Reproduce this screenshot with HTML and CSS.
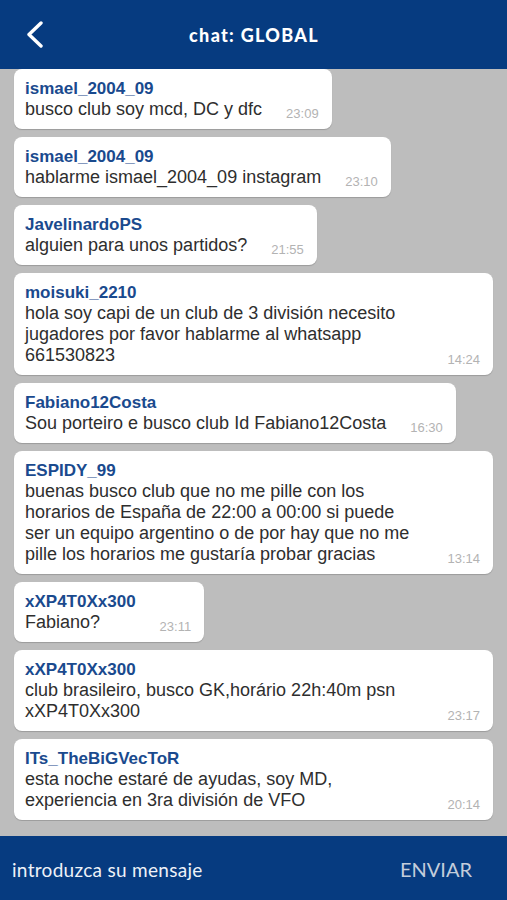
FILE: index.html
```html
<!DOCTYPE html>
<html lang="es">
<head>
<meta charset="utf-8">
<title>chat: GLOBAL</title>
<link rel="stylesheet" href="styles.css">
</head>
<body>
<div class="app">
  <header class="topbar">
    <svg class="back" width="20" height="30" viewBox="0 0 20 30" aria-hidden="true">
      <polyline points="14,2 2,13.5 14,25" fill="none" stroke="#fff" stroke-width="3.4" stroke-linecap="round" stroke-linejoin="round"/>
    </svg>
    <h1 class="title">chat: GLOBAL</h1>
  </header>
  <main class="list">
    <div class="msg">
      <div class="body"><div class="name">ismael_2004_09</div><div class="text">busco club soy mcd, DC y dfc</div></div>
      <div class="time">23:09</div>
    </div>
    <div class="msg">
      <div class="body"><div class="name">ismael_2004_09</div><div class="text">hablarme ismael_2004_09 instagram</div></div>
      <div class="time">23:10</div>
    </div>
    <div class="msg">
      <div class="body"><div class="name">JavelinardoPS</div><div class="text">alguien para unos partidos?</div></div>
      <div class="time">21:55</div>
    </div>
    <div class="msg">
      <div class="body wide"><div class="name">moisuki_2210</div><div class="text">hola soy capi de un club de 3 división necesito jugadores por favor hablarme al whatsapp 661530823</div></div>
      <div class="time">14:24</div>
    </div>
    <div class="msg">
      <div class="body"><div class="name">Fabiano12Costa</div><div class="text">Sou porteiro e busco club Id Fabiano12Costa</div></div>
      <div class="time">16:30</div>
    </div>
    <div class="msg">
      <div class="body wide"><div class="name">ESPIDY_99</div><div class="text">buenas busco club que no me pille con los horarios de España de 22:00 a 00:00 si puede ser un equipo argentino o de por hay que no me pille los horarios me gustaría probar gracias</div></div>
      <div class="time">13:14</div>
    </div>
    <div class="msg">
      <div class="body"><div class="name">xXP4T0Xx300</div><div class="text">Fabiano?</div></div>
      <div class="time">23:11</div>
    </div>
    <div class="msg">
      <div class="body wide"><div class="name">xXP4T0Xx300</div><div class="text">club brasileiro, busco GK,horário 22h:40m psn xXP4T0Xx300</div></div>
      <div class="time">23:17</div>
    </div>
    <div class="msg">
      <div class="body wide"><div class="name">ITs_TheBiGVecToR</div><div class="text">esta noche estaré de ayudas, soy MD, experiencia en 3ra división de VFO</div></div>
      <div class="time">20:14</div>
    </div>
  </main>
  <footer class="composer">
    <span class="placeholder">introduzca su mensaje</span>
    <span class="send">ENVIAR</span>
  </footer>
</div>
</body>
</html>
```

FILE: styles.css
```css
* { box-sizing: border-box; }
html, body { margin: 0; padding: 0; }
body {
  width: 507px;
  height: 900px;
  overflow: hidden;
  background: #bdbdbd;
  font-family: "Liberation Sans", Arial, sans-serif;
}
.app {
  height: 900px;
  display: flex;
  flex-direction: column;
}
.topbar {
  height: 69px;
  flex: none;
  background: #063b80;
  position: relative;
  display: flex;
  align-items: center;
  justify-content: center;
  z-index: 2;
}
.back {
  position: absolute;
  left: 27px;
  top: 21px;
}
.title {
  margin: 0;
  color: #fff;
  font-family: "Lato", "DejaVu Sans", sans-serif;
  font-weight: 900;
  font-size: 18px;
  letter-spacing: 1.3px;
  padding-left: 1px;
}
.list {
  flex: 1;
  overflow: hidden;
  display: flex;
  flex-direction: column;
  align-items: flex-start;
  gap: 8px;
  padding: 0 14px;
}
.msg {
  display: flex;
  background: #fff;
  border-radius: 8px;
  box-shadow: 0 1px 1px rgba(0,0,0,0.18);
  padding: 9px 13px 10px 11px;
  max-width: 479px;
}
.body { min-width: 0; }
.body.wide { width: 399px; }
.name {
  color: #1a4a8e;
  font-weight: bold;
  font-size: 17px;
  line-height: 20px;
  padding-top: 1px;
}
.text {
  color: #2e2e2e;
  font-size: 18px;
  line-height: 21px;
  margin-bottom: -1px;
}
.time {
  align-self: flex-end;
  flex: none;
  margin-left: 24px;
  margin-bottom: -1px;
  color: #b3b3b3;
  font-size: 13px;
  line-height: 13px;
}
.composer {
  flex: none;
  height: 64px;
  margin-top: 15px;
  background: #063b80;
  display: flex;
  align-items: center;
  justify-content: space-between;
  padding: 2px 35px 0 12px;
  font-family: "Lato", "DejaVu Sans", sans-serif;
  font-size: 19px;
}
.placeholder { color: #eef2f8; letter-spacing: 0.3px; }
.send { color: #c3cddb; font-size: 20px; }
```
